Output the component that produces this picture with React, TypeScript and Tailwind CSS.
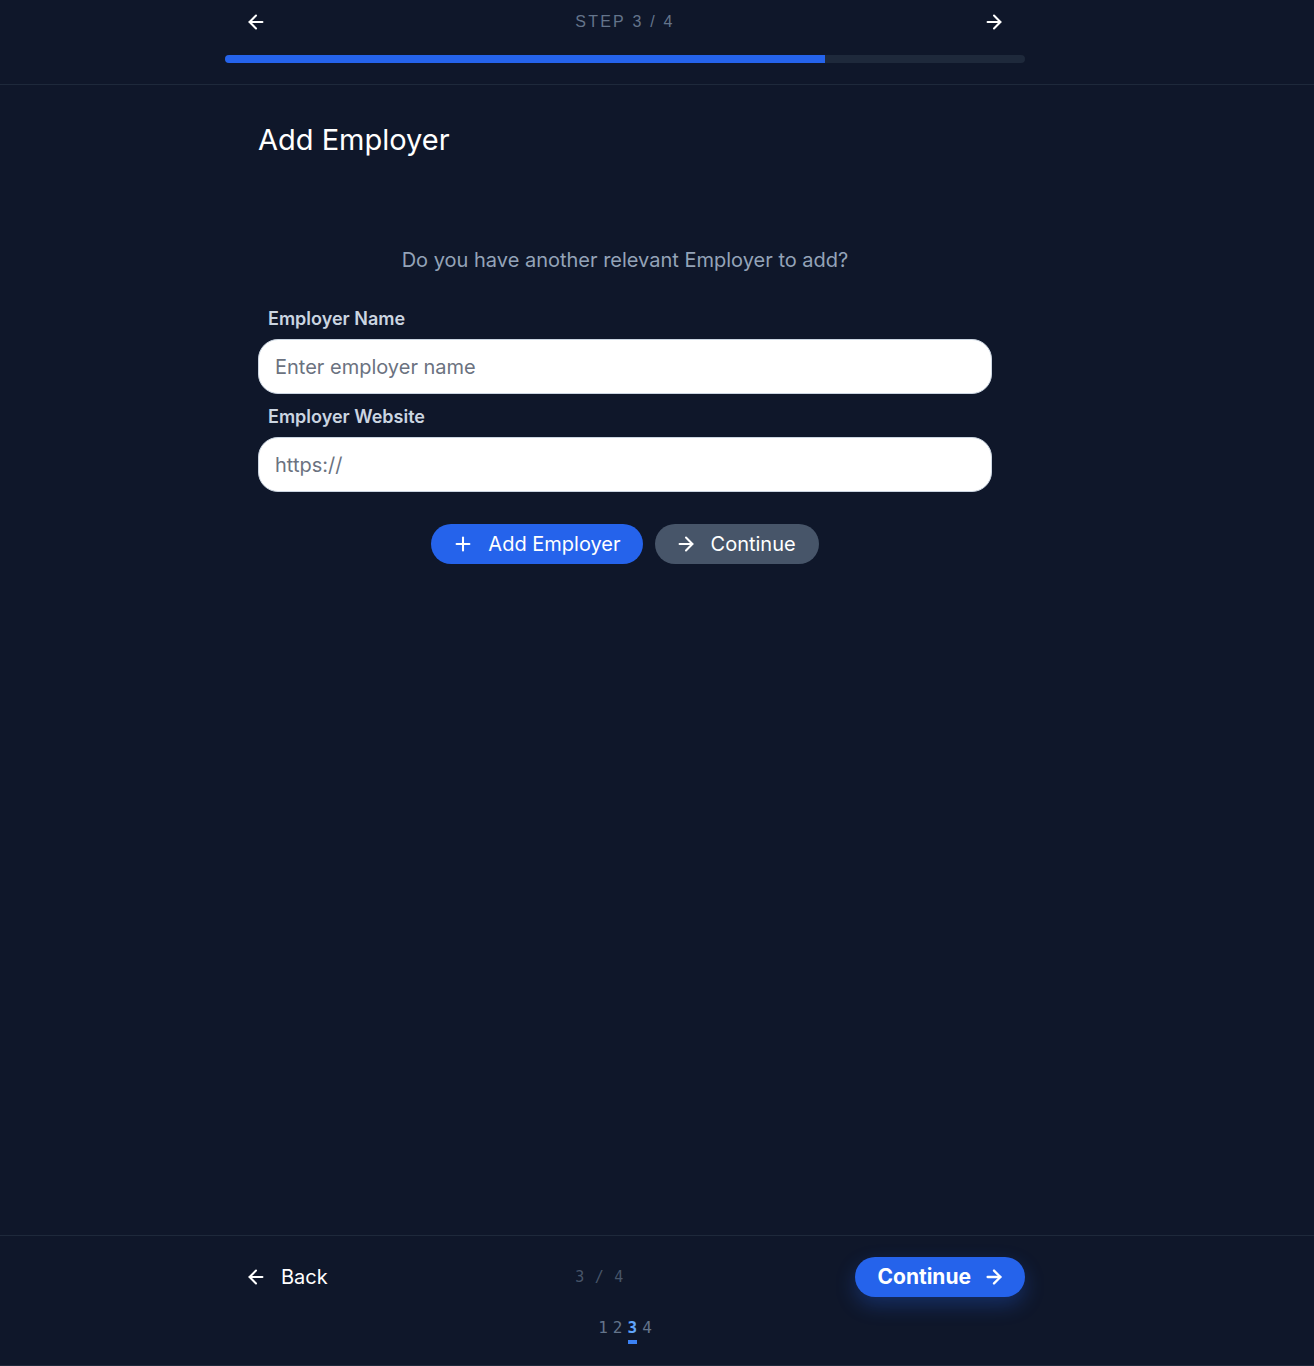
import React, { useState } from 'react';
import { ArrowLeft, ArrowRight, Plus } from 'lucide-react';

const STEPS = [1, 2, 3, 4];

const App: React.FC = () => {
  const [step] = useState(3);
  const [name, setName] = useState('');
  const [website, setWebsite] = useState('');

  return (
    <div className="min-h-screen flex flex-col bg-[#0f172a] text-white font-['Inter','Noto_Sans',sans-serif]">
      {/* Top bar with progress */}
      <header className="border-b border-[#1e293b] h-[85px]">
        <div className="w-[1250px]">
          <div className="w-[800px] mx-auto">
            <div className="flex items-center justify-between h-[44px] px-[20px]">
              <button className="text-white"><ArrowLeft size={22} strokeWidth={2.25} /></button>
              <span className="text-[16px] font-medium tracking-[0.14em] text-[#64748b] font-['Liberation_Sans',sans-serif]">STEP {step} / 4</span>
              <button className="text-white"><ArrowRight size={22} strokeWidth={2.25} /></button>
            </div>
            <div className="mt-[11px] h-[8px] w-full rounded-full bg-[#1e293b] overflow-hidden">
              <div className="h-full bg-[#2563eb]" style={{ width: `${(step / 4) * 100}%` }} />
            </div>
          </div>
        </div>
      </header>

      {/* Main content */}
      <main className="flex-1">
        <div className="w-[1250px]">
          <div className="w-[800px] mx-auto px-[33px]">
            <h1 className="mt-[35px] text-[29px] leading-[40px] font-normal text-white">Add Employer</h1>
            <p className="mt-[86px] text-center text-[20px] leading-[28px] text-[#94a3b8]">Do you have another relevant Employer to add?</p>

            <div className="mt-[33px]">
              <label className="block px-[10px] text-[18px] font-semibold text-[#cbd5e1] leading-[24px]">Employer Name</label>
              <input
                value={name}
                onChange={e => setName(e.target.value)}
                placeholder="Enter employer name"
                className="mt-[8px] w-full h-[55px] rounded-[20px] bg-white border border-[#cbd5e1] px-[16px] text-[20px] text-[#111827] placeholder:text-[#6b7280] outline-none"
              />
              <label className="mt-[11px] block px-[10px] text-[18px] font-semibold text-[#cbd5e1] leading-[24px]">Employer Website</label>
              <input
                value={website}
                onChange={e => setWebsite(e.target.value)}
                placeholder="https://"
                className="mt-[8px] w-full h-[55px] rounded-[20px] bg-white border border-[#cbd5e1] px-[16px] text-[20px] text-[#111827] placeholder:text-[#6b7280] outline-none"
              />
            </div>

            <div className="mt-[32px] flex justify-center gap-[12px]">
              <button className="h-[40px] flex items-center gap-[14px] rounded-full bg-[#2563eb] pl-[21px] pr-[22px] text-[20px] text-white">
                <Plus size={22} strokeWidth={2.25} /> Add Employer
              </button>
              <button className="h-[40px] flex items-center gap-[14px] rounded-full bg-[#475569] pl-[20px] pr-[23px] text-[20px] text-white">
                <ArrowRight size={22} strokeWidth={2.25} /> Continue
              </button>
            </div>
          </div>
        </div>
      </main>

      {/* Footer navigation */}
      <footer className="h-[131px] border-t border-b border-[#1e293b]">
        <div className="w-[1250px]">
          <div className="w-[800px] mx-auto">
            <div className="mt-[21px] flex items-center justify-between h-[40px]">
              <button className="flex items-center gap-[14px] pl-[20px] text-[20px] text-white">
                <ArrowLeft size={22} strokeWidth={2.25} /> Back
              </button>
              <span className="ml-[16px] font-['DejaVu_Sans_Mono',monospace] text-[15px] tracking-[0.05em] text-[#475569]">{step} / 4</span>
              <button className="flex items-center gap-[12px] h-[40px] rounded-full bg-[#2563eb] pl-[22px] pr-[20px] text-[21px] font-bold text-white shadow-[0_8px_20px_rgba(37,99,235,0.3)]">
                Continue <ArrowRight size={22} strokeWidth={2.5} />
              </button>
            </div>
            <div className="mt-[19px] flex justify-center gap-[5px] font-['DejaVu_Sans_Mono',monospace] text-[16px]">
              {STEPS.map(s => (
                <span key={s} className={`flex flex-col items-center ${s === step ? 'text-[#60a5fa] font-bold' : 'text-[#64748b]'}`}>
                  {s}
                  <span className={`mt-[0px] h-[4px] w-[9px] ${s === step ? 'bg-[#3b82f6]' : 'bg-transparent'}`} />
                </span>
              ))}
            </div>
          </div>
        </div>
      </footer>
    </div>
  );
};

export default App;
